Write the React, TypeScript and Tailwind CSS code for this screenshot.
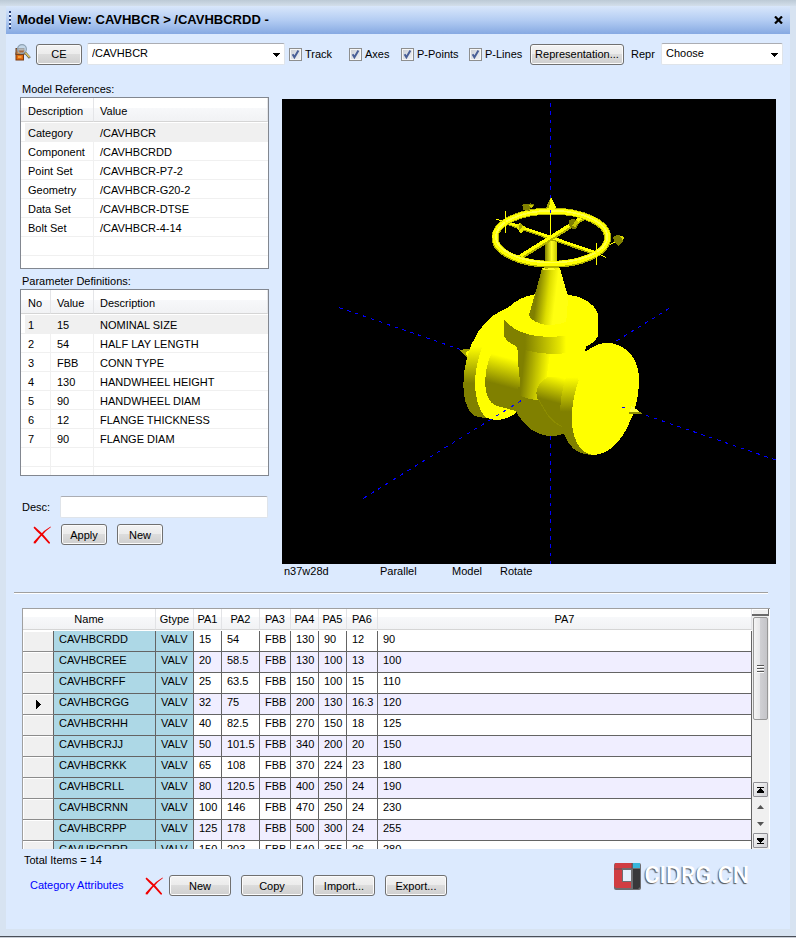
import React from "react";

const references = [
  ["Category", "/CAVHBCR"],
  ["Component", "/CAVHBCRDD"],
  ["Point Set", "/CAVHBCR-P7-2"],
  ["Geometry", "/CAVHBCR-G20-2"],
  ["Data Set", "/CAVHBCR-DTSE"],
  ["Bolt Set", "/CAVHBCR-4-14"],
  ["", ""],
  ["", ""],
];

const parameters = [
  ["1", "15", "NOMINAL SIZE"],
  ["2", "54", "HALF LAY LENGTH"],
  ["3", "FBB", "CONN TYPE"],
  ["4", "130", "HANDWHEEL HEIGHT"],
  ["5", "90", "HANDWHEEL DIAM"],
  ["6", "12", "FLANGE THICKNESS"],
  ["7", "90", "FLANGE DIAM"],
  ["", "", ""],
  ["", "", ""],
];

const components = [
  ["CAVHBCRDD", "VALV", "15", "54", "FBB", "130", "90", "12", "90"],
  ["CAVHBCREE", "VALV", "20", "58.5", "FBB", "130", "100", "13", "100"],
  ["CAVHBCRFF", "VALV", "25", "63.5", "FBB", "150", "100", "15", "110"],
  ["CAVHBCRGG", "VALV", "32", "75", "FBB", "200", "130", "16.3", "120"],
  ["CAVHBCRHH", "VALV", "40", "82.5", "FBB", "270", "150", "18", "125"],
  ["CAVHBCRJJ", "VALV", "50", "101.5", "FBB", "340", "200", "20", "150"],
  ["CAVHBCRKK", "VALV", "65", "108", "FBB", "370", "224", "23", "180"],
  ["CAVHBCRLL", "VALV", "80", "120.5", "FBB", "400", "250", "24", "190"],
  ["CAVHBCRNN", "VALV", "100", "146", "FBB", "470", "250", "24", "230"],
  ["CAVHBCRPP", "VALV", "125", "178", "FBB", "500", "300", "24", "255"],
  ["CAVHBCRRR", "VALV", "150", "203", "FBB", "540", "355", "26", "280"],
];

function Button({ children, className = "" }: { children: React.ReactNode; className?: string }) {
  return (
    <button
      type="button"
      className={`flex h-[21px] shrink-0 items-center justify-center rounded-[3px] border border-[#707070] bg-[linear-gradient(#f3f3f3,#ebebeb_50%,#dcdcdc_50%,#cfcfcf)] pt-[1px] whitespace-nowrap shadow-[inset_0_0_0_1px_#fbfbfb] ${className}`}
    >
      {children}
    </button>
  );
}

function Combo({ label, value, className = "" }: { label: string; value: string; className?: string }) {
  return (
    <div className={`grid items-center ${className}`}>
      <select
        aria-label={label}
        defaultValue={value}
        className="h-[22px] w-full appearance-none rounded-[2px] border border-[#dfe4ea] border-t-[#abadb3] bg-white pr-5 pb-[2px] pl-[4px] [grid-area:1/1]"
      >
        <option>{value}</option>
      </select>
      <svg
        viewBox="0 0 7 4"
        className="pointer-events-none mt-[2px] mr-[5px] h-[4px] w-[7px] justify-self-end [grid-area:1/1]"
        shapeRendering="crispEdges"
      >
        <path d="M0 0H7L3.5 4Z" />
      </svg>
    </div>
  );
}

function Check({ label, className = "" }: { label: string; className?: string }) {
  return (
    <label className={`flex shrink-0 items-center gap-[3px] ${className}`}>
      <span className="grid size-[13px] shrink-0">
        <input
          type="checkbox"
          defaultChecked
          className="size-[13px] appearance-none border border-[#8e8f8f] bg-[linear-gradient(135deg,#c9cdd4,#f4f5f7)] shadow-[inset_0_0_0_1px_#f6f6f6] [grid-area:1/1]"
        />
        <svg viewBox="0 0 13 13" className="pointer-events-none size-[13px] [grid-area:1/1]">
          <path d="M3.6 6.2L5.4 9.2L9.4 2.6" fill="none" stroke="#4a5f97" strokeWidth="2" />
        </svg>
      </span>
      <span className="pt-[1px] whitespace-nowrap">{label}</span>
    </label>
  );
}

function DeleteIcon() {
  return (
    <svg viewBox="0 0 18 18" className="size-[18px] shrink-0">
      <path d="M0.5 1.8L1.6 0.6L6 4.6L10 8.2L17 16.4V17.4H15.6L8.6 9.8L4 5.4Z" fill="#f00000" />
      <path d="M17.6 0.4L17.8 1.2L13 5L7.4 11L2.4 17.4L0.6 17.2L0.8 15.8L5.6 10.6L11 5Z" fill="#f00000" />
    </svg>
  );
}

function FindIcon() {
  return (
    <svg viewBox="0 0 16 17" className="mb-[3px] h-[17px] w-[16px] shrink-0">
      <rect x="1" y="9" width="7.5" height="7" fill="#e06a10" stroke="#7a3a10" />
      <rect x="1" y="4.5" width="8" height="6" fill="#b98052" stroke="#6d4527" />
      <path d="M3 13H6.5M3 8.5H7" stroke="#ffb347" strokeWidth="1.4" />
      <circle cx="7" cy="5" r="4.4" fill="#b8cfe0" fillOpacity="0.7" stroke="#8ea2b4" strokeWidth="1.2" />
      <path d="M3.5 6.5H9.5L8 8.6H5Z" fill="#a5683c" />
      <path d="M10 8.5L14.8 14" stroke="#5f5a4a" strokeWidth="2.6" />
      <path d="M10.2 8.6L14.6 13.4" stroke="#e8cf6a" strokeWidth="1.4" />
    </svg>
  );
}

function ListTable({ heads, rows, widths }: { heads: string[]; rows: string[][]; widths: string[] }) {
  return (
    <table className="w-full table-fixed border-separate border-spacing-0 text-left">
      <colgroup>
        {widths.map((w, i) => (
          <col key={i} className={w} />
        ))}
      </colgroup>
      <thead>
        <tr>
          {heads.map((h, i) => (
            <th key={h} scope="col" className="h-[25px] p-0 align-top font-normal">
              <div
                className={`flex h-[24px] items-center border-r border-b border-r-[#e4e5e8] border-b-[#d5d5d5] bg-[linear-gradient(#fff_45%,#f7f8fa_45%,#f1f2f4)] pt-[3px] ${
                  i === 0 ? "pl-[7px]" : "pl-[6px]"
                }`}
              >
                {h}
              </div>
            </th>
          ))}
        </tr>
      </thead>
      <tbody>
        {rows.map((row, r) => (
          <tr key={r} className={r === 0 ? "bg-[#f0f0f0]" : ""}>
            {row.map((cell, c) => (
              <td
                key={c}
                className={`h-[19px] border-b border-[#f0f0f0] p-0 pt-[2px] leading-[16px] whitespace-nowrap ${
                  c === 0 ? "pl-[7px]" : "pl-[6px]"
                } ${c < row.length - 1 ? "border-r" : ""} ${
                  r === 0 && c === 0 ? "bg-[linear-gradient(to_right,#fff_4px,#f0f0f0_4px)]" : ""
                }`}
              >
                {cell}
              </td>
            ))}
          </tr>
        ))}
      </tbody>
    </table>
  );
}

function ValveView() {
  return (
    <svg
      viewBox="6 27 1482 1395"
      className="block h-[465px] w-full bg-black"
      role="img"
      aria-label="Valve model"
    >
      <defs>
        <linearGradient id="rimL" gradientUnits="userSpaceOnUse" x1="0" y1="500" x2="0" y2="610">
          <stop offset="0" stopColor="#ff0" />
          <stop offset="1" stopColor="#808000" />
        </linearGradient>
        <linearGradient id="pipeL" gradientUnits="userSpaceOnUse" x1="190" y1="530" x2="168" y2="612">
          <stop offset="0" stopColor="#ff0" />
          <stop offset="1" stopColor="#808000" />
        </linearGradient>
        <linearGradient id="pipeR" gradientUnits="userSpaceOnUse" x1="345" y1="588" x2="325" y2="662">
          <stop offset="0" stopColor="#ff0" />
          <stop offset="1" stopColor="#808000" />
        </linearGradient>
        <linearGradient id="rimR" gradientUnits="userSpaceOnUse" x1="0" y1="592" x2="0" y2="695">
          <stop offset="0" stopColor="#ff0" />
          <stop offset="1" stopColor="#808000" />
        </linearGradient>
        <linearGradient id="bonnet" gradientUnits="userSpaceOnUse" x1="255" y1="0" x2="378" y2="0">
          <stop offset="0" stopColor="#808000" />
          <stop offset="0.85" stopColor="#e6e600" />
          <stop offset="1" stopColor="#ff0" />
        </linearGradient>
        <linearGradient id="neck" gradientUnits="userSpaceOnUse" x1="248" y1="570" x2="326" y2="578">
          <stop offset="0" stopColor="#808000" />
          <stop offset="1" stopColor="#ff0" />
        </linearGradient>
        <linearGradient id="stem" gradientUnits="userSpaceOnUse" x1="288" y1="360" x2="345" y2="367">
          <stop offset="0" stopColor="#808000" />
          <stop offset="0.6" stopColor="#dddd00" />
          <stop offset="1" stopColor="#ffff10" />
        </linearGradient>
        <linearGradient id="rod" gradientUnits="userSpaceOnUse" x1="315" y1="0" x2="351" y2="0">
          <stop offset="0" stopColor="#808000" />
          <stop offset="0.55" stopColor="#ffff20" />
          <stop offset="1" stopColor="#c8c800" />
        </linearGradient>
        <linearGradient id="body" gradientUnits="userSpaceOnUse" x1="300" y1="690" x2="330" y2="600">
          <stop offset="0" stopColor="#808000" />
          <stop offset="1" stopColor="#ff0" />
        </linearGradient>
      </defs>

      <g stroke="#0000ff" strokeWidth="3" strokeDasharray="11 14" shapeRendering="crispEdges">
        <path d="M811 39V345" />
        <path d="M811 1038V1422" />
        <path d="M178 653L540 778" />
        <path d="M1098 976L1488 1110" />
        <path d="M1168 655L985 768" />
      </g>

      <g transform="translate(480 270)" shapeRendering="crispEdges">
        {/* left flange and pipe */}
        <path d="M57 510L90 506L80 532Z" fill="#a0a000" />
        <path d="M76 518L92 508L82 532Z" fill="#ff0" />
        <path
          d="M230 375C180 388 145 410 115 455C85 500 70 560 70 615C70 655 80 685 96 702C110 714 120 710 136 714L235 690Z"
          fill="url(#rimL)"
        />
        <path
          d="M240 420L127 500C112 540 105 575 105 615C106 655 118 695 137 712C165 726 205 722 232 694L260 600Z"
          fill="#ff0"
        />
        <path
          d="M155 520C140 550 135 580 136 615C137 640 145 668 168 677L232 694L260 640L250 540Z"
          fill="url(#pipeL)"
        />

        {/* lower body */}
        <path d="M235 620L228 694C250 735 285 768 335 768C360 767 370 762 385 755L390 600Z" fill="#808000" />
        <path d="M293 658L290 635L322 590L380 580L366 740C335 725 312 700 293 658Z" fill="url(#body)" />

        {/* neck and yoke */}
        <path
          d="M232 500L235 555L240 605L236 645C255 655 275 660 293 661C288 636 300 608 330 590L400 590L440 500Z"
          fill="url(#neck)"
        />
        <path d="M330 588C302 600 290 622 289 638C292 670 310 715 368 748L375 590Z" fill="url(#pipeR)" />
        <path d="M295 656C320 705 335 725 366 740" fill="none" stroke="#8c8c00" strokeWidth="3" />

        {/* right flange */}
        <path d="M320 590L375 590L400 560L437 516L433 500L330 520Z" fill="#ff0" />
        <path
          d="M495 488C460 492 425 520 397 555C373 588 363 640 360 690C360 750 378 785 400 806C415 818 435 824 460 825L480 600Z"
          fill="url(#rimR)"
        />
        <path
          d="M495 488C545 488 588 520 596 580C600 630 588 690 572 718C550 780 505 825 460 825C415 822 393 765 395 705C398 660 408 625 416 600L400 560C425 520 460 492 495 488Z"
          fill="#ff0"
        />
        <path d="M574 677L608 702L568 703Z" fill="#ffff40" />
        <path d="M568 697H602L608 702L568 703Z" fill="#909000" />

        {/* bonnet flange */}
        <path
          d="M192 417L204 383C230 358 255 348 285 343L382 343C430 350 462 370 474 400V470C460 487 452 495 432 503C400 520 365 522 335 522C280 520 210 505 192 468Z"
          fill="url(#bonnet)"
        />
        <path
          d="M192 417L204 383C230 358 255 348 285 343L382 343C430 350 462 370 474 400L470 440L380 467C350 471 320 471 290 468C250 462 210 445 192 417Z"
          fill="#ff0"
        />

        {/* tapered stem */}
        <path
          d="M306 265C320 261 345 261 360 265L382 343C384 380 382 405 378 425C360 435 335 436 315 434C290 430 270 418 267 405L285 343Z"
          fill="url(#stem)"
        />
        <path d="M306 265C318 272 330 264 345 268" fill="none" stroke="#ffff20" strokeWidth="4" />
        <path d="M315 180H351V262H315Z" fill="url(#rod)" />

        {/* handwheel */}
        <path d="M333 50L352 88L316 88Z" fill="#ff0" />
        <path d="M333 50L326 88H316Z" fill="#a0a000" />
        <path d="M204 130L465 220" stroke="#a8a800" strokeWidth="11" />
        <path d="M204 128L465 217" stroke="#ff0" strokeWidth="8" />
        <path d="M432 112L236 235" stroke="#b4b400" strokeWidth="15" />
        <path d="M430 110L236 231" stroke="#ff0" strokeWidth="10" />
        <ellipse cx="334" cy="173" rx="169" ry="80" fill="none" stroke="#b4b400" strokeWidth="21" />
        <ellipse cx="334" cy="172" rx="169" ry="79" fill="none" stroke="#ff0" strokeWidth="16" />
        <ellipse cx="335" cy="170" rx="167" ry="78" fill="none" stroke="#ffff48" strokeWidth="5" />
        <path d="M331 95V178" stroke="#ff0" strokeWidth="3" />
        <path d="M331 91V99" stroke="#00f" strokeWidth="3" />
        <path
          d="M196 92V158M168 117L206 129M469 190V255M460 214L498 233M510 193L530 183"
          stroke="#ff0"
          strokeWidth="3"
        />
        <path d="M247 74L272 70L283 74L276 84L264 87L270 92L250 90Z" fill="#808000" />
        <path d="M264 74H282L275 84Z" fill="#c8c800" />
        <path d="M228 139L240 128L247 136L260 141L250 151L246 161L238 155Z" fill="#e8e800" />
        <path d="M240 128L248 137L244 146L236 150Z" fill="#a8a800" />
        <path d="M386 122L396 116L408 120L416 132L408 146L396 147L386 134Z" fill="#808000" />
        <path d="M396 136L410 120L417 126L406 141Z" fill="#c8c800" />
        <path d="M519 172L530 164L552 170L548 186L536 197L524 188Z" fill="#808000" />
        <path d="M540 168L552 170L549 182Z" fill="#d8d800" />
      </g>

      <g stroke="#0000ff" strokeWidth="3" strokeDasharray="11 15" shapeRendering="crispEdges">
        <path d="M250 1225L725 931" />
        <path d="M1026 951L1038 955" />
      </g>
    </svg>
  );
}

function GridScroll() {
  return (
    <div className="flex w-[18px] shrink-0 flex-col items-center border-r border-white bg-[#f0f0f0]">
      <div className="h-[7px] w-full border-r border-b-2 border-[#696969] bg-[#f0f0f0] shadow-[inset_1px_1px_0_#fff]" />
      <div className="mt-[1px] flex h-[103px] w-[15px] flex-col items-center justify-center gap-[1px] rounded-[2px] border border-[#979797] bg-[linear-gradient(to_right,#f4f4f4,#e6e6e8_48%,#cfcfd3_50%,#c4c4c8)]">
        <span className="h-[2px] w-[7px] border-b border-white bg-[#555]" />
        <span className="h-[2px] w-[7px] border-b border-white bg-[#555]" />
        <span className="h-[2px] w-[7px] border-b border-white bg-[#555]" />
      </div>
      <div className="flex-1" />
      <button
        type="button"
        aria-label="First row"
        className="flex size-[15px] items-center justify-center rounded-[1px] border border-[#8f8f95] bg-[linear-gradient(135deg,#f7f7f7,#cfcfd4)]"
      >
        <svg viewBox="0 0 7 6" className="h-[6px] w-[7px]" shapeRendering="crispEdges">
          <path d="M0 0H7V1H0ZM3 1H4L7 5V6H0V5Z" />
        </svg>
      </button>
      <button type="button" aria-label="Up" className="flex h-[19px] w-[15px] items-center justify-center">
        <svg viewBox="0 0 7 4" className="h-[4px] w-[7px]">
          <path d="M0 4L3.5 0L7 4Z" fill="#555" />
        </svg>
      </button>
      <button type="button" aria-label="Down" className="flex h-[17px] w-[15px] items-center justify-center pb-[2px]">
        <svg viewBox="0 0 7 4" className="h-[4px] w-[7px]">
          <path d="M0 0L3.5 4L7 0Z" fill="#555" />
        </svg>
      </button>
      <button
        type="button"
        aria-label="Last row"
        className="mb-[1px] flex size-[15px] items-center justify-center rounded-[1px] border border-[#8f8f95] bg-[linear-gradient(135deg,#f7f7f7,#cfcfd4)]"
      >
        <svg viewBox="0 0 7 6" className="h-[6px] w-[7px]" shapeRendering="crispEdges">
          <path d="M0 0H7V1L4 5H7V6H0V5H3L0 1Z" />
        </svg>
      </button>
    </div>
  );
}

const gridHeads = ["Gtype", "PA1", "PA2", "PA3", "PA4", "PA5", "PA6", "PA7"];

function HeadCell({ children }: { children: React.ReactNode }) {
  return (
    <div className="flex h-[21px] items-center justify-center border-r border-b border-r-[#e2e3e6] border-b-[#d5d5d5] bg-[linear-gradient(#fff_40%,#f7f8fa_40%,#f1f2f4)]">
      {children}
    </div>
  );
}

function ComponentGrid() {
  return (
    <div className="mr-[12px] ml-[8px] flex h-[241px] overflow-hidden border-t border-l border-[#a0a0a0] bg-white">
      <div className="min-w-0 flex-1 overflow-hidden">
        <table className="w-full table-fixed border-separate border-spacing-0 text-left">
          <colgroup>
            <col className="w-[31px]" />
            <col className="w-[102px]" />
            <col className="w-[38px]" />
            <col className="w-[28px]" />
            <col className="w-[38px]" />
            <col className="w-[31px]" />
            <col className="w-[28px]" />
            <col className="w-[28px]" />
            <col className="w-[31px]" />
            <col />
          </colgroup>
          <thead>
            <tr>
              <th scope="col" colSpan={2} className="h-[22px] p-0 align-top font-normal">
                <HeadCell>Name</HeadCell>
              </th>
              {gridHeads.map((h) => (
                <th key={h} scope="col" className="h-[22px] p-0 align-top font-normal">
                  <HeadCell>{h}</HeadCell>
                </th>
              ))}
            </tr>
          </thead>
          <tbody>
            {components.map((row, r) => (
              <tr key={row[0]} className={r % 2 ? "bg-[#f0eeff]" : "bg-white"}>
                <td className="h-[21px] border-r border-b border-r-[#646464] border-b-[#8c8c8c] bg-[#f0f0f0] p-0 shadow-[inset_1px_1px_0_#fff]">
                  {r === 3 && (
                    <svg viewBox="0 0 5 9" className="mt-[1px] ml-[13px] h-[9px] w-[5px]" shapeRendering="crispEdges">
                      <path d="M0 0L5 4.5L0 9Z" />
                    </svg>
                  )}
                </td>
                {row.map((cell, c) => (
                  <td
                    key={c}
                    className={`h-[21px] border-r border-b border-[#646464] p-0 pb-[3px] pl-[5px] leading-[17px] whitespace-nowrap ${
                      c < 2 ? "bg-[#add8e6]" : ""
                    }`}
                  >
                    {cell}
                  </td>
                ))}
              </tr>
            ))}
          </tbody>
        </table>
      </div>
      <GridScroll />
    </div>
  );
}

function Logo() {
  return (
    <div className="flex items-center gap-[4px]">
      <svg viewBox="0 0 28 28" className="size-[28px]">
        <rect x="1" y="1" width="27" height="27" rx="2" fill="#6d6d70" />
        <path d="M2 1H19V6H9V20H18V26H3L1 24V7Z" fill="#d03d42" />
        <path d="M20 7H27V25L25 27H20Z" fill="#38383a" />
        <rect x="20" y="1" width="7" height="5" fill="#38b6dc" />
        <rect x="10" y="8" width="8" height="11" fill="#e4eefb" />
        <path d="M1 7H9M19 1V7" stroke="#5d5357" strokeWidth="1" />
      </svg>
      <span className="font-[Roboto,'DejaVu_Sans_Condensed',sans-serif] text-[23px] leading-[28px] font-medium text-white [text-shadow:-1px_1px_1px_#555]">
        CIDRG.CN
      </span>
    </div>
  );
}

export default function App() {
  return (
    <div className="flex min-h-screen flex-col bg-[#d7e3f1] font-['Liberation_Sans',Arial,sans-serif] text-[11px] leading-[13px] text-black">
      <div className="h-[6px] bg-[linear-gradient(#bccad6,#d3dfeb)]" />
      <main className="mx-[6px] flex-1 bg-[#dceafe]">
        <header className="flex h-[28px] items-center justify-between bg-[linear-gradient(#d9e7fb,#b4cdf3_50%,#86a9e2)] pr-[7px] pl-[3px]">
          <div className="flex items-center gap-[6px]">
            <span className="h-[18px] w-[2px] bg-[repeating-linear-gradient(#27407a_0_2px,#eef4ff_2px_4px)]" />
            <h1 className="text-[13px] leading-[16px] font-bold">Model View: CAVHBCR &gt; /CAVHBCRDD -</h1>
          </div>
          <button type="button" aria-label="Close">
            <svg viewBox="0 0 9 8" className="h-[8px] w-[9px]">
              <path d="M1 0.5L8 7.5M8 0.5L1 7.5" stroke="#000" strokeWidth="2.2" />
            </svg>
          </button>
        </header>

        <div className="flex h-[40px] items-center pr-[7px] pl-[9px]">
          <FindIcon />
          <Button className="ml-[5px] w-[46px]">CE</Button>
          <Combo label="Element" value="/CAVHBCR" className="ml-[5px] w-[198px] shrink-0" />
          <Check label="Track" className="ml-[4px] w-[60px]" />
          <Check label="Axes" className="w-[52px]" />
          <Check label="P-Points" className="w-[68px]" />
          <Check label="P-Lines" className="w-[61px]" />
          <Button className="w-[94px]">Representation...</Button>
          <span className="ml-[7px] w-[30px] shrink-0">Repr</span>
          <Combo label="Repr" value="Choose" className="min-w-[80px] flex-1" />
        </div>

        <div className="flex gap-[13px] pr-[14px] pl-[14px]">
          <section className="w-[249px] shrink-0 pt-[9px]">
            <h2 className="pl-[2px]">Model References:</h2>
            <div className="mt-[1px] h-[172px] overflow-hidden border border-[#828790] bg-white">
              <ListTable heads={["Description", "Value"]} rows={references} widths={["w-[73px]", ""]} />
            </div>
            <h2 className="mt-[6px] pl-[2px]">Parameter Definitions:</h2>
            <div className="mt-[1px] h-[187px] overflow-hidden border border-[#828790] bg-white">
              <ListTable
                heads={["No", "Value", "Description"]}
                rows={parameters}
                widths={["w-[30px]", "w-[43px]", ""]}
              />
            </div>
            <div className="mt-[20px] flex items-center pr-[1px] pl-[2px]">
              <label htmlFor="desc" className="w-[38px]">
                Desc:
              </label>
              <input
                id="desc"
                type="text"
                className="h-[22px] min-w-0 flex-1 rounded-[2px] border border-[#dfe4ea] border-t-[#abadb3] bg-white px-1"
              />
            </div>
            <div className="mt-[6px] flex items-center gap-[10px] pl-[13px]">
              <DeleteIcon />
              <Button className="w-[46px]">Apply</Button>
              <Button className="w-[46px]">New</Button>
            </div>
          </section>

          <section className="min-w-0 flex-1 pt-[25px]">
            <ValveView />
            <div className="mt-[1px] flex pl-[2px]">
              <span className="w-[96px]">n37w28d</span>
              <span className="w-[72px]">Parallel</span>
              <span className="w-[48px]">Model</span>
              <span>Rotate</span>
            </div>
          </section>
        </div>

        <section className="mt-[14px] px-[8px]">
          <hr className="mr-[14px] h-[2px] border-t border-b border-t-[#a0a0a0] border-b-white" />
          <div className="mt-[14px]">
            <ComponentGrid />
          </div>
          <div className="flex items-start justify-between pr-[33px]">
            <div>
              <p className="mt-[5px] pl-[10px]">Total Items = 14</p>
              <div className="mt-[8px] flex items-center pl-[16px]">
                <a href="#attributes" className="w-[115px] text-[#0000ff]">
                  Category Attributes
                </a>
                <DeleteIcon />
                <div className="ml-[6px] flex gap-[10px]">
                  <Button className="w-[62px]">New</Button>
                  <Button className="w-[62px]">Copy</Button>
                  <Button className="w-[62px]">Import...</Button>
                  <Button className="w-[62px]">Export...</Button>
                </div>
              </div>
            </div>
            <div className="mt-[13px]">
              <Logo />
            </div>
          </div>
        </section>
      </main>
      <footer className="mt-[7px] h-[2px] border-t border-[#4a4f57] bg-[#c9ced6]" />
    </div>
  );
}
